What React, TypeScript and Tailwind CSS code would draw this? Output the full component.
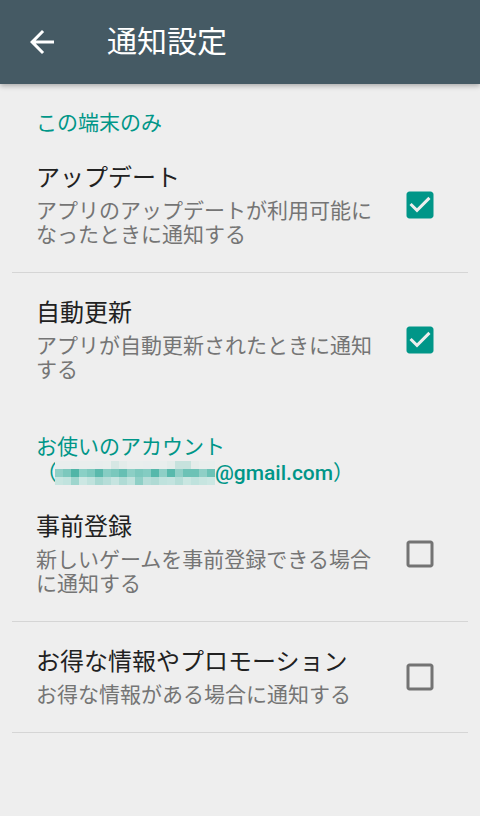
import * as React from "react";

const fontStack = {
  fontFamily: 'Roboto, "Noto Sans CJK JP", sans-serif',
};

// pixelated email blocks (3 rows x 20 columns)
const blurRows: string[][] = [
  [
    "#e9eeed", "#e9eeed", "#e8eded", "#e9eeed", "#e9eeed", "#e8eded", "#e9eeed",
    "#d6e7e4", "#e3ecea", "#e9eeed", "#e9eeed", "#e8eded", "#e9eeed", "#e9eeed",
    "#e3ecea", "#c6e2dd", "#c6e2dd", "#e5ecea", "#e9eeed", "#e9eeed",
  ],
  [
    "#8fcfc6", "#7cc8bd", "#4fb5a7", "#8ad0c6", "#7dc9be", "#5ab9ac", "#86cdc3",
    "#7ac8bd", "#66bfb3", "#8ccfc5", "#7cc8bd", "#84ccc2", "#56b8ab", "#8ecfc6",
    "#58b9ac", "#8fcfc6", "#6cc2b6", "#6cc2b6", "#8fcfc6", "#6cc2b6",
  ],
  [
    "#c7e5e0", "#c1e3de", "#9ed5cd", "#cce7e3", "#c0e2dd", "#a8d8d1", "#b6ddd8",
    "#c6e4e0", "#b0dbd5", "#c0e2dd", "#8fcfc6", "#b6ddd8", "#afdad4", "#bfe2dd",
    "#c3e3df", "#b5ddd7", "#c9e6e1", "#bfe2dd", "#c7e5e0", "#cce7e3",
  ],
];

interface SettingRowProps {
  title: string;
  summary: string;
  checked: boolean;
  divider?: boolean;
}

const CheckBox: React.FC<{ checked: boolean }> = ({ checked }) => (
  <svg viewBox="0 0 24 24" className="w-[36px] h-[36px] shrink-0">
    {checked ? (
      <path
        fill="#009688"
        d="M19 3H5c-1.11 0-2 .9-2 2v14c0 1.1.89 2 2 2h14c1.11 0 2-.9 2-2V5c0-1.1-.89-2-2-2zm-9 14l-5-5 1.41-1.41L10 14.17l7.59-7.59L19 8l-9 9z"
      />
    ) : (
      <path
        fill="#737373"
        d="M19 5v14H5V5h14m0-2H5c-1.1 0-2 .9-2 2v14c0 1.1.9 2 2 2h14c1.1 0 2-.9 2-2V5c0-1.1-.9-2-2-2z"
      />
    )}
  </svg>
);

const SettingRow: React.FC<SettingRowProps> = ({ title, summary, checked, divider }) => (
  <>
    <div className="flex items-center gap-[21px] pl-[36px] pr-[42px] pt-[25px] pb-[25px]">
      <div className="flex-1 min-w-0">
        <div className="text-[24px] leading-[30px] text-[#212121]">{title}</div>
        <div className="mt-[6px] text-[21px] leading-[24px] text-[#757575]">{summary}</div>
      </div>
      <CheckBox checked={checked} />
    </div>
    {divider && <div className="mx-[12px] h-px bg-[#d5d5d5]" />}
  </>
);

export default function App() {
  return (
    <div className="w-[480px] h-[816px] bg-[#eeeeee] overflow-hidden" style={fontStack}>
      {/* Toolbar */}
      <header className="relative z-10 flex items-center h-[84px] bg-[#455a64] shadow-[0_2px_5px_rgba(0,0,0,0.28)]">
        <div className="w-[108px] pl-[24px]">
          <svg viewBox="0 0 24 24" className="w-[36px] h-[36px]">
            <path
              fill="#ffffff"
              d="M20 11H7.83l5.59-5.59L12 4l-8 8 8 8 1.41-1.41L7.83 13H20v-2z"
            />
          </svg>
        </div>
        <h1 className="-ml-[1px] text-[30px] leading-[36px] text-white">通知設定</h1>
      </header>

      {/* This device only */}
      <div className="pl-[36px] pt-[27px] pb-[3px] text-[21px] leading-[24px] text-[#009688]">
        この端末のみ
      </div>
      <SettingRow
        title="アップデート"
        summary="アプリのアップデートが利用可能になったときに通知する"
        checked
        divider
      />
      <SettingRow
        title="自動更新"
        summary="アプリが自動更新されたときに通知する"
        checked
      />

      {/* Account */}
      <div className="pl-[36px] pt-[28px] pb-[2px] text-[21px] leading-[24px] text-[#009688]">
        <div>お使いのアカウント</div>
        <div className="flex items-center h-[26px] pt-[2px]">
          <span>（</span>
          <div className="-ml-[2px] flex flex-col">
            {blurRows.map((row, i) => (
              <div key={i} className="flex">
                {row.map((c, j) => (
                  <div key={j} className="w-[8px] h-[8px]" style={{ backgroundColor: c }} />
                ))}
              </div>
            ))}
          </div>
          <span className="font-medium">@gmail.com</span>
          <span>）</span>
        </div>
      </div>
      <SettingRow
        title="事前登録"
        summary="新しいゲームを事前登録できる場合に通知する"
        checked={false}
        divider
      />
      <SettingRow
        title="お得な情報やプロモーション"
        summary="お得な情報がある場合に通知する"
        checked={false}
        divider
      />
    </div>
  );
}
